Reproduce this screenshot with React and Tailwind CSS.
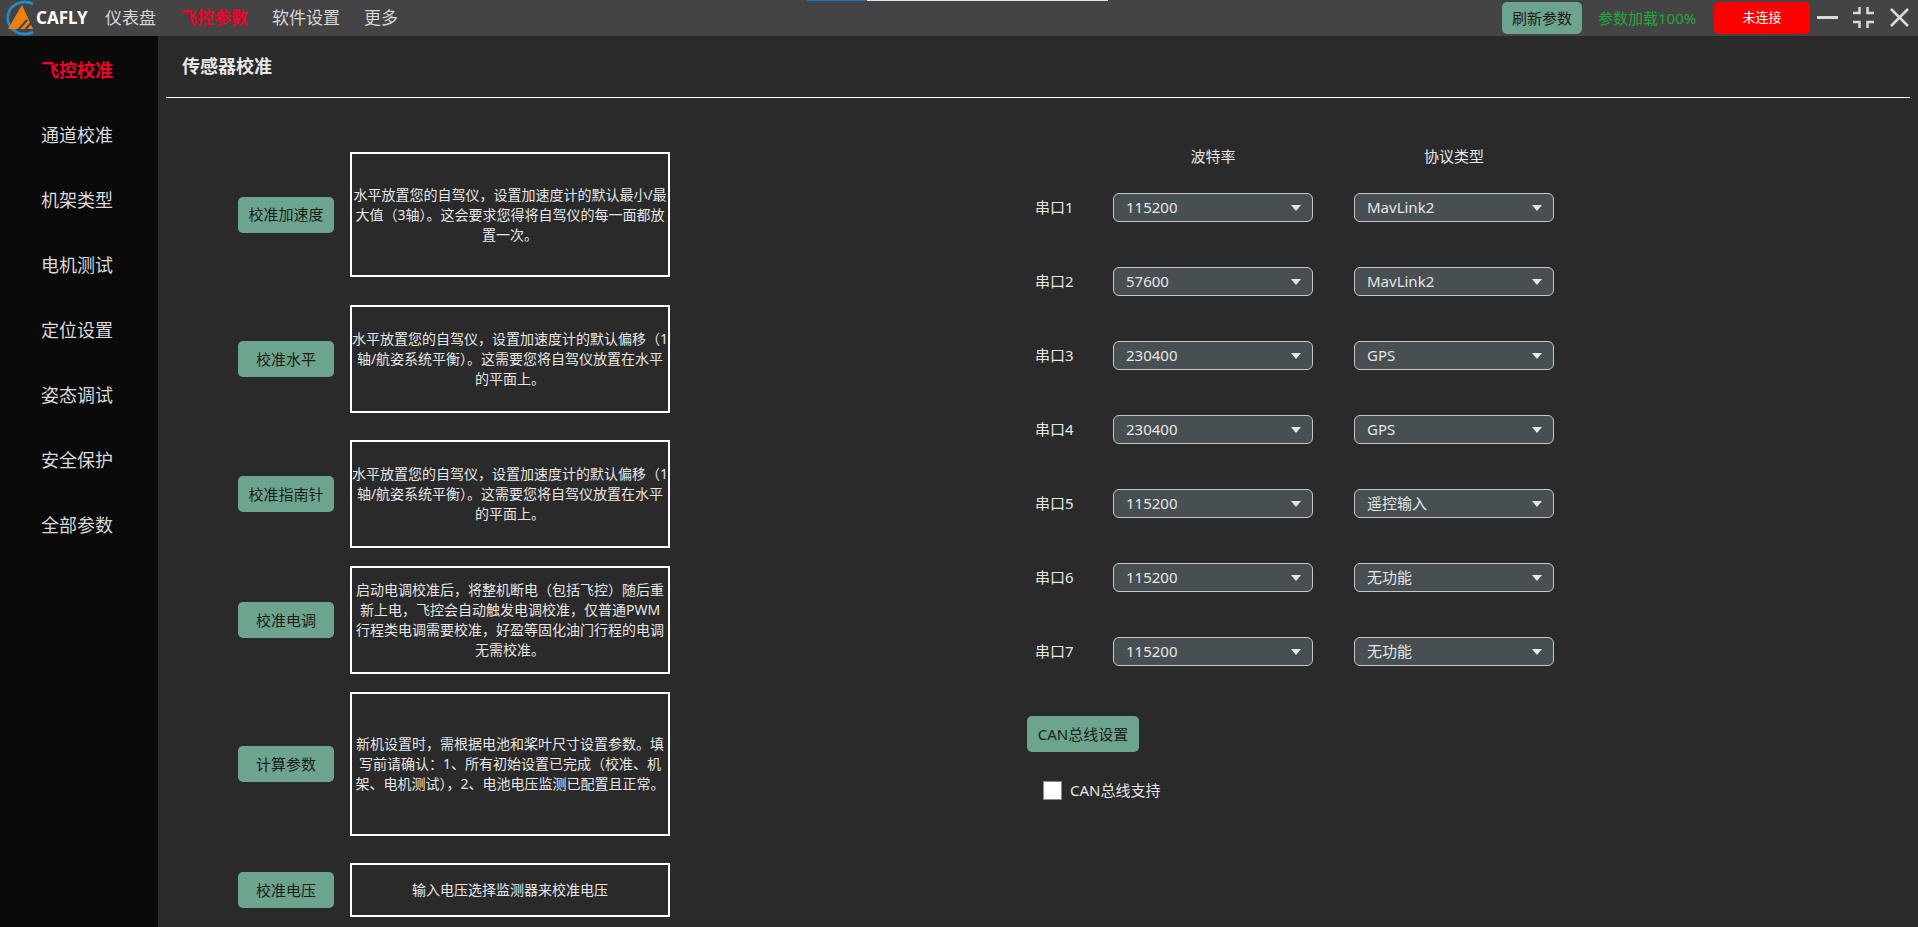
import React from 'react';

const FONT = "font-['Noto_Sans','Noto_Sans_CJK_SC',sans-serif]";

const sideItems = ['飞控校准', '通道校准', '机架类型', '电机测试', '定位设置', '姿态调试', '安全保护', '全部参数'];

// box = height of the row and the gap above it
const calibrations = [
  { label: '校准加速度', box: 'h-[125px]', lines: ['水平放置您的自驾仪，设置加速度计的默认最小/最', '大值（3轴）。这会要求您得将自驾仪的每一面都放', '置一次。'] },
  { label: '校准水平', box: 'h-[108px] mt-[28px]', lines: ['水平放置您的自驾仪，设置加速度计的默认偏移（1', '轴/航姿系统平衡）。这需要您将自驾仪放置在水平', '的平面上。'] },
  { label: '校准指南针', box: 'h-[108px] mt-[27px]', lines: ['水平放置您的自驾仪，设置加速度计的默认偏移（1', '轴/航姿系统平衡）。这需要您将自驾仪放置在水平', '的平面上。'] },
  { label: '校准电调', box: 'h-[108px] mt-[18px]', lines: ['启动电调校准后，将整机断电（包括飞控）随后重', '新上电，飞控会自动触发电调校准，仅普通PWM', '行程类电调需要校准，好盈等固化油门行程的电调', '无需校准。'] },
  { label: '计算参数', box: 'h-[144px] mt-[18px]', lines: ['新机设置时，需根据电池和桨叶尺寸设置参数。填', '写前请确认：1、所有初始设置已完成（校准、机', '架、电机测试），2、电池电压监测已配置且正常。'] },
  { label: '校准电压', box: 'h-[54px] mt-[27px]', lines: ['输入电压选择监测器来校准电压'] },
];

const ports = [
  ['串口1', '115200', 'MavLink2'],
  ['串口2', '57600', 'MavLink2'],
  ['串口3', '230400', 'GPS'],
  ['串口4', '230400', 'GPS'],
  ['串口5', '115200', '遥控输入'],
  ['串口6', '115200', '无功能'],
  ['串口7', '115200', '无功能'],
];

const Logo = () => (
  <svg width="36" height="36" viewBox="0 0 36 36" className="shrink-0">
    <path d="M33 4 A17 16 0 1 0 33 32" fill="none" stroke="#1f8fd0" strokeWidth="2.6" />
    <path d="M8 29 L22 5 L33 29 Z" fill="#f07f13" />
    <path d="M18 30 L27 20 M25 30 L31 23" stroke="#444444" strokeWidth="2" fill="none" />
  </svg>
);

const Select = ({ value }) => (
  <div className="flex h-[29px] w-[200px] items-center justify-between rounded-[6px] border border-[#c4c8ca] bg-[#474f52] pr-[11px] pl-[12px] text-[15px] text-[#e6e6e6]">
    <span>{value}</span>
    <svg width="10" height="6" viewBox="0 0 10 6">
      <path d="M0 0 H10 L5 6 Z" fill="#e6e6e6" />
    </svg>
  </div>
);

const CalibrationRow = ({ label, box, lines }) => (
  <div className={`flex items-center ${box}`}>
    <button className="flex h-9 w-24 shrink-0 items-center justify-center rounded-[5px] bg-[#6ca48d] text-[15px] text-[#1c1c1c]">
      {label}
    </button>
    <div className="ml-4 flex h-full w-80 flex-col items-center justify-center border-2 border-white text-sm leading-5 whitespace-nowrap text-[#e6e6e6]">
      {lines.map((line) => (
        <div key={line}>{line}</div>
      ))}
    </div>
  </div>
);

export default function App() {
  return (
    <div className={`relative flex h-[927px] w-[1918px] flex-col overflow-hidden bg-[#2a2a2a] ${FONT}`}>
      {/* progress strip */}
      <div className="absolute top-0 left-[807px] flex h-px w-[301px] bg-[#e6e6e6]">
        <div className="h-full w-[60px] bg-[#0a78d7]" />
      </div>

      {/* Top bar */}
      <div className="flex h-9 shrink-0 items-center bg-[#444444]">
        <Logo />
        <span className="w-[53px] text-[17px] font-bold whitespace-nowrap text-white">CAFLY</span>
        <nav className="ml-4 flex gap-6 text-[17px] text-[#d6d6d6]">
          <span>仪表盘</span>
          <span className="font-bold text-[#f0002a]">飞控参数</span>
          <span>软件设置</span>
          <span>更多</span>
        </nav>
        <div className="ml-auto flex items-center">
          <button className="flex h-8 w-20 items-center justify-center rounded-[5px] bg-[#6ca48d] text-[15px] text-[#1c1c1c]">
            刷新参数
          </button>
          <span className="ml-4 w-[100px] text-[15px] whitespace-nowrap text-[#1fa83a]">参数加载100%</span>
          <button className="ml-4 flex h-8 w-24 items-center justify-center rounded-[5px] bg-[#ff0000] text-[13px] text-white">
            未连接
          </button>
          <svg width="108" height="36" viewBox="0 0 108 36" stroke="#d9d9d9" fill="none" strokeWidth="3">
            <path d="M7 17.5 H28" />
            <path d="M43 13 H49.5 V7 M43 22 H49.5 V28 M64 13 H57.5 V7 M64 22 H57.5 V28" strokeWidth="2.5" />
            <path d="M81 9 L98 26 M98 9 L81 26" strokeWidth="2.5" />
          </svg>
        </div>
      </div>

      <div className="flex min-h-0 flex-1">
        {/* Sidebar */}
        <aside className="w-[158px] shrink-0 bg-[#0a0a0a] pt-px pl-[41px]">
          {sideItems.map((item, i) => (
            <div
              key={item}
              className={`flex h-[65px] items-center text-lg ${i === 0 ? 'font-bold text-[#f0002a]' : 'text-[#d9d9d9]'}`}
            >
              {item}
            </div>
          ))}
        </aside>

        {/* Main */}
        <main className="min-w-0 flex-1 pr-2 pl-2">
          <div className="flex h-[62px] items-center border-b border-white pb-px pl-4 text-lg font-bold text-[#e6e6e6]">
            传感器校准
          </div>
          <div className="flex">
            <section className="mt-[54px] ml-[72px] flex w-[432px] shrink-0 flex-col">
              {calibrations.map((row) => (
                <CalibrationRow key={row.label} {...row} />
              ))}
            </section>

            <section className="mt-[46px] ml-[357px] text-[15px] text-[#e6e6e6]">
              <div className="ml-[86px] flex h-6 items-center">
                <span className="w-[200px] text-center">波特率</span>
                <span className="ml-[41px] w-[200px] text-center">协议类型</span>
              </div>
              <div className="mt-[25px] flex flex-col gap-[45px]">
                {ports.map(([name, baud, proto]) => (
                  <div key={name} className="flex items-center">
                    <span className="ml-2 w-[78px]">{name}</span>
                    <Select value={baud} />
                    <div className="ml-[41px]">
                      <Select value={proto} />
                    </div>
                  </div>
                ))}
              </div>
              <button className="mt-[50px] flex h-9 w-[112px] items-center justify-center rounded-[5px] bg-[#6ca48d] text-[15px] whitespace-nowrap text-[#1c1c1c]">
                CAN总线设置
              </button>
              <label className="mt-[27px] ml-[16px] flex items-center gap-2">
                <span className="h-[19px] w-[19px] border border-[#8a8a8a] bg-white" />
                <span>CAN总线支持</span>
              </label>
            </section>
          </div>
        </main>
      </div>
    </div>
  );
}
